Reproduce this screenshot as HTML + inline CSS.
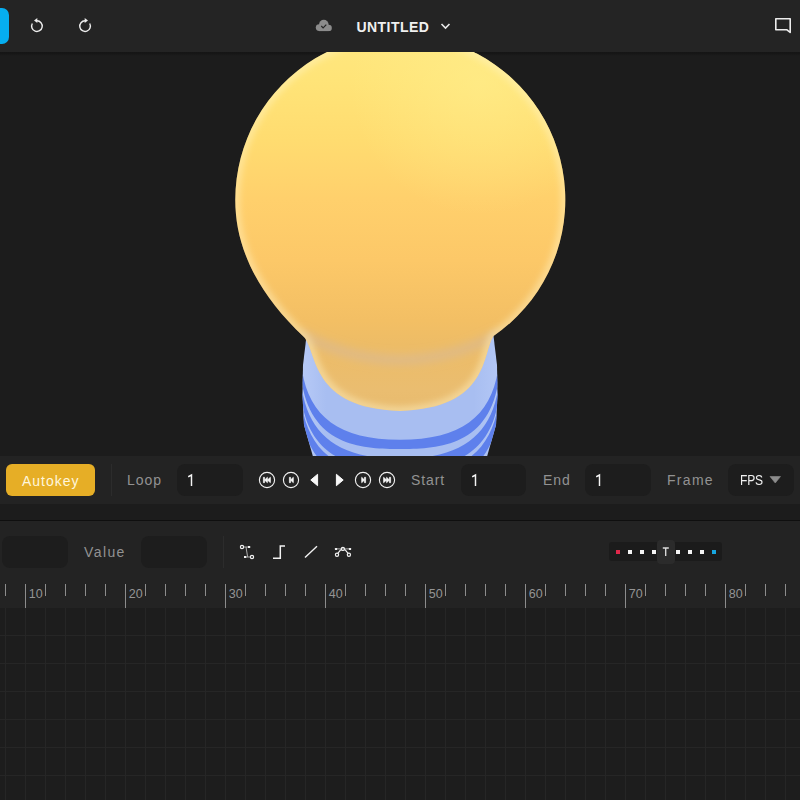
<!DOCTYPE html>
<html><head><meta charset="utf-8">
<style>
*{margin:0;padding:0;box-sizing:border-box}
html,body{width:800px;height:800px;overflow:hidden;background:#1c1c1c;font-family:"Liberation Sans",sans-serif}
.a{position:absolute}
#hdr{left:0;top:0;width:800px;height:52px;background:#242424}
#vp{left:0;top:52px;width:800px;height:404px;background:#1c1c1c;overflow:hidden}
#tb{left:0;top:456px;width:800px;height:48px;background:#232323}
#band{left:0;top:504px;width:800px;height:16px;background:#1c1c1c}
#line{left:0;top:520px;width:800px;height:1px;background:#0f0f0f}
#gp{left:0;top:521px;width:800px;height:87px;background:#232323}
#grid{left:0;top:608px;width:800px;height:192px;background:#1d1d1d}
.lbl{font-size:14px;color:#929292;line-height:16px;white-space:nowrap}
.inp{background:#1d1d1d;border-radius:8px}
.val{font-size:14px;color:#f2f2f2;line-height:16px}
</style></head><body>
<div id="hdr" class="a">
  <div class="a" style="left:-8px;top:8px;width:17px;height:36px;background:#06aef0;border-radius:7px"></div>
  <svg class="a" style="left:0;top:0" width="800" height="52">
    <!-- undo -->
    <g fill="none" stroke="#ededed" stroke-width="1.4">
      <path d="M32.3 23.5 A5.3 5.3 0 1 0 37 20.8"/>
      <path d="M89.7 23.5 A5.3 5.3 0 1 1 85 20.8"/>
    </g>
    <path d="M34 20.4 L37.3 17.9 L37.3 22.9 Z" fill="#ededed"/>
    <path d="M88 20.4 L84.7 17.9 L84.7 22.9 Z" fill="#ededed"/>
    <!-- cloud -->
    <g fill="#8c8c8c"><circle cx="319.2" cy="27.6" r="3.4"/><circle cx="323.8" cy="24.6" r="4.8"/><circle cx="328.6" cy="27.9" r="3.2"/><rect x="319" y="26" width="9.8" height="5.1"/></g>
    <path d="M321.3 26 l1.8 1.8 l3.2 -3.2" fill="none" stroke="#262626" stroke-width="1.2"/>
    <!-- chevron -->
    <path d="M441.5 24 L445.5 28 L449.5 24" fill="none" stroke="#e8e8e8" stroke-width="1.6"/>
    <!-- comment -->
    <path d="M775.8 18.8 H790.2 V32.5 L787 29.8 H775.8 Z" fill="none" stroke="#ececec" stroke-width="1.6" stroke-linejoin="round"/>
  </svg>
  <div class="a" style="left:356.5px;top:17.5px;font-size:14px;font-weight:bold;color:#f0f0f0;letter-spacing:0.45px;line-height:18px">UNTITLED</div>
</div>

<div id="vp" class="a">
  <div class="a" style="left:0;top:0;width:800px;height:4px;background:linear-gradient(#151515,#161616 40%,rgba(28,28,28,0))"></div>
  <svg class="a" style="left:0;top:-52px" width="800" height="508">
    <defs>
      <linearGradient id="gy" x1="0" y1="40" x2="0" y2="410" gradientUnits="userSpaceOnUse">
        <stop offset="0" stop-color="#ffe77f"/>
        <stop offset="0.108" stop-color="#ffe478"/>
        <stop offset="0.27" stop-color="#ffdc70"/>
        <stop offset="0.43" stop-color="#ffd06c"/>
        <stop offset="0.595" stop-color="#fcc868"/>
        <stop offset="0.757" stop-color="#f3bf64"/>
        <stop offset="0.824" stop-color="#edbc66"/>
        <stop offset="0.946" stop-color="#eabd70"/>
        <stop offset="1" stop-color="#e8bb6e"/>
      </linearGradient>
      <radialGradient id="gh" cx="480" cy="85" r="130" gradientUnits="userSpaceOnUse">
        <stop offset="0" stop-color="#fff090" stop-opacity="0.5"/>
        <stop offset="1" stop-color="#fff08e" stop-opacity="0"/>
      </radialGradient>
      <radialGradient id="grim" cx="400" cy="199.5" r="166" gradientUnits="userSpaceOnUse">
        <stop offset="0.86" stop-color="#fff0c0" stop-opacity="0"/>
        <stop offset="1" stop-color="#fff0c0" stop-opacity="0.45"/>
      </radialGradient>
      <linearGradient id="gb" x1="303" y1="0" x2="497" y2="0" gradientUnits="userSpaceOnUse">
        <stop offset="0" stop-color="#b6c9f6"/>
        <stop offset="0.12" stop-color="#a8bef1"/>
        <stop offset="0.88" stop-color="#a8bef1"/>
        <stop offset="1" stop-color="#b2c6f5"/>
      </linearGradient>
      <clipPath id="cb"><path d="M306.5 336 L493.5 336 L497 365 L497.5 395 L496 425 L487.2 456 L312.8 456 L304 425 L302.5 395 L303 365 Z"/></clipPath>
      <clipPath id="cbulb"><path d="M304 337 C257 293 235.3 247 235.3 200 A165 165 0 1 1 493.5 336 C482 353 490 408 400 411 C310 408 318 353 304 337 Z"/></clipPath>
      <filter id="blur4" x="-20%" y="-20%" width="140%" height="140%"><feGaussianBlur stdDeviation="3"/></filter>
      <filter id="blur6" x="-20%" y="-50%" width="140%" height="200%"><feGaussianBlur stdDeviation="4.5"/></filter>
      <filter id="blur1" x="-10%" y="-10%" width="120%" height="120%"><feGaussianBlur stdDeviation="1.2"/></filter>
    </defs>
    <!-- base -->
    <g clip-path="url(#cb)">
      <rect x="290" y="330" width="220" height="140" fill="url(#gb)"/>
      <g fill="#5e80ec"><path d="M300 343.5 C300 407.5 328 439.75 400 439.75 C472 439.75 500 407.5 500 343.5 L500 358 C500 448 438 449 400 449 C362 449 300 448 300 358 Z"/><path d="M300 362.5 C300 426.5 328 458.75 400 458.75 C472 458.75 500 426.5 500 362.5 L500 377 C500 467 438 468 400 468 C362 468 300 467 300 377 Z"/><path d="M300 379.0 C300 443.0 328 475.25 400 475.25 C472 475.25 500 443.0 500 379.0 L500 393.5 C500 483.5 438 484.5 400 484.5 C362 484.5 300 483.5 300 393.5 Z"/></g>
    </g>
    <!-- bulb -->
    <path d="M304 337 C257 293 235.3 247 235.3 200 A165 165 0 1 1 493.5 336 C482 353 490 408 400 411 C310 408 318 353 304 337 Z" fill="url(#gy)"/>
    <path d="M304 337 C257 293 235.3 247 235.3 200 A165 165 0 1 1 493.5 336 C482 353 490 408 400 411 C310 408 318 353 304 337 Z" fill="url(#gh)"/>
    <g clip-path="url(#cbulb)"><path d="M300 334 Q400 386 500 334" fill="none" stroke="#d4b9a0" stroke-opacity="0.5" stroke-width="10" filter="url(#blur6)"/></g>
    <g clip-path="url(#cbulb)"><path d="M304 337 C257 293 235.3 247 235.3 200 A165 165 0 1 1 493.5 336 C482 353 490 408 400 411 C310 408 318 353 304 337 Z" fill="none" stroke="#fff3c8" stroke-opacity="0.45" stroke-width="9" filter="url(#blur4)"/></g>
  </svg>
</div>

<div id="tb" class="a">
  <div class="a" style="left:6px;top:8px;width:89px;height:32px;background:#e6ae26;border-radius:6px"></div>
  <div class="a" style="left:22px;top:17px;font-size:14px;color:#fff6dc;letter-spacing:1px;line-height:16px">Autokey</div>
  <div class="a" style="left:111px;top:8px;width:1px;height:32px;background:#2c2c2c"></div>
  <div class="a lbl" style="left:127px;top:16px;letter-spacing:1px">Loop</div>
  <div class="a inp" style="left:177px;top:8px;width:66px;height:32px"></div>
  <svg class="a" style="left:188px;top:16px" width="10" height="24"><path d="M0.8 4.4 L3.5 3 V13.2" fill="none" stroke="#f4f4f4" stroke-width="1.45" stroke-linecap="square" stroke-linejoin="miter"/></svg>
  <svg class="a" style="left:0;top:0" width="800" height="48">
    <g fill="none" stroke="#f0f0f0" stroke-width="1.15">
      <circle cx="267" cy="24" r="7.6"/>
      <circle cx="291" cy="24" r="7.6"/>
      <circle cx="363" cy="24" r="7.6"/>
      <circle cx="387" cy="24" r="7.6"/>
    </g>
    <g fill="#f8f8f8" stroke="#f8f8f8" stroke-width="0.7" stroke-linejoin="round">
      <rect x="263.4" y="21.3" width="1.1" height="5.4"/>
      <path d="M264.5 24 L267.4 21.3 V26.7 Z M267.4 24 L270.4 21.3 V26.7 Z"/>
      <rect x="289.4" y="21.3" width="1.1" height="5.4"/>
      <path d="M290.5 24 L293.3 21.3 V26.7 Z"/>
      <path d="M317.6 18.3 V29.7 L310.8 24 Z" stroke-width="1"/>
      <path d="M336.4 18.3 V29.7 L343.2 24 Z" stroke-width="1"/>
      <rect x="364.5" y="21.3" width="1.1" height="5.4"/>
      <path d="M364.5 24 L361.7 21.3 V26.7 Z"/>
      <rect x="389.5" y="21.3" width="1.1" height="5.4"/>
      <path d="M389.5 24 L386.6 21.3 V26.7 Z M386.6 24 L383.6 21.3 V26.7 Z"/>
    </g>
  </svg>
  <div class="a lbl" style="left:411px;top:16px;letter-spacing:0.9px">Start</div>
  <div class="a inp" style="left:461px;top:8px;width:65px;height:32px"></div>
  <svg class="a" style="left:472px;top:16px" width="10" height="24"><path d="M0.8 4.4 L3.5 3 V13.2" fill="none" stroke="#f4f4f4" stroke-width="1.45" stroke-linecap="square" stroke-linejoin="miter"/></svg>
  <div class="a lbl" style="left:543px;top:16px;letter-spacing:1px">End</div>
  <div class="a inp" style="left:585px;top:8px;width:66px;height:32px"></div>
  <svg class="a" style="left:596px;top:16px" width="10" height="24"><path d="M0.8 4.4 L3.5 3 V13.2" fill="none" stroke="#f4f4f4" stroke-width="1.45" stroke-linecap="square" stroke-linejoin="miter"/></svg>
  <div class="a lbl" style="left:667px;top:16px;letter-spacing:1.3px">Frame</div>
  <div class="a inp" style="left:728px;top:8px;width:66px;height:32px"></div>
  <div class="a val" style="left:739.6px;top:16px;font-size:14px;letter-spacing:-0.2px;color:#f0f0f0;transform:scaleX(0.86);transform-origin:0 0">FPS</div>
  <svg class="a" style="left:760px;top:0" width="40" height="48"><path d="M10 20.5 H20.5 L15.25 27 Z" fill="#8c8c8c" stroke="#8c8c8c" stroke-width="0.6" stroke-linejoin="round"/></svg>
</div>

<div id="band" class="a"></div>
<div id="line" class="a"></div>

<div id="gp" class="a">
  <div class="a inp" style="left:2px;top:15px;width:66px;height:32px"></div>
  <div class="a lbl" style="left:84px;top:23px;letter-spacing:1.4px">Value</div>
  <div class="a inp" style="left:141px;top:15px;width:66px;height:32px"></div>
  <div class="a" style="left:223px;top:15px;width:1px;height:32px;background:#2c2c2c"></div>
  <svg class="a" style="left:0;top:0" width="800" height="87">
    <g fill="none" stroke="#bdbdbd" stroke-width="0.9">
      <path d="M243.5 26 H248 M246 26 L247.6 35.8 M246 36 H250.5"/>
      <path d="M336 27.9 H350"/>
    </g>
    <g fill="none" stroke="#f2f2f2" stroke-width="1.2">
      <circle cx="242" cy="26" r="1.6"/>
      <circle cx="252" cy="36" r="1.6"/>
      <path d="M273 37.3 H280.3 V25 H285" stroke-width="1.5"/>
      <path d="M305 36.6 L317 25.2" stroke-width="1.4"/>
      <circle cx="342.9" cy="27.9" r="1.6"/>
      <circle cx="337" cy="33.8" r="1.6"/>
      <path d="M337.8 32.4 L340.8 28.6 M345 28.6 L348.1 32.4"/>
      <circle cx="348.9" cy="33.8" r="1.6"/>
    </g>
    <g fill="#f4f4f4">
      <rect x="248" y="25" width="2.2" height="2"/>
      <rect x="244" y="35" width="2.2" height="2"/>
      <rect x="334.9" y="26.9" width="2.2" height="2" rx="0.5"/>
      <rect x="348.9" y="26.9" width="2.2" height="2" rx="0.5"/>
    </g>
  </svg>
  <!-- keyframe strip -->
  <div class="a" style="left:609px;top:21px;width:113px;height:19px;background:#1b1b1b;border-radius:3px"></div>
  <div class="a" style="left:657px;top:19px;width:18px;height:24px;background:#2b2b2b;border-radius:4px"></div>
  <svg class="a" style="left:657px;top:19px" width="18" height="24"><path d="M5.8 8 H11.8 M8.7 8 V16" fill="none" stroke="#dcdcdc" stroke-width="1.35"/></svg>
  <div class="a" style="left:615.5px;top:29px;width:4px;height:4px;background:#e0284a"></div>
  <div class="a" style="left:627.5px;top:29px;width:4px;height:4px;background:#f4f4f4"></div>
  <div class="a" style="left:639.5px;top:29px;width:4px;height:4px;background:#f4f4f4"></div>
  <div class="a" style="left:651.5px;top:29px;width:4px;height:4px;background:#f4f4f4"></div>
  <div class="a" style="left:675.5px;top:29px;width:4px;height:4px;background:#f4f4f4"></div>
  <div class="a" style="left:687.5px;top:29px;width:4px;height:4px;background:#f4f4f4"></div>
  <div class="a" style="left:699.5px;top:29px;width:4px;height:4px;background:#f4f4f4"></div>
  <div class="a" style="left:711.5px;top:29px;width:4px;height:4px;background:#17a6e0"></div>
</div>

<div id="grid" class="a">
  <svg class="a" style="left:0;top:0" width="800" height="192" id="gridsvg"><g fill="#262626"><rect x="5" y="0" width="1" height="192"/><rect x="25" y="0" width="1" height="192"/><rect x="45" y="0" width="1" height="192"/><rect x="65" y="0" width="1" height="192"/><rect x="85" y="0" width="1" height="192"/><rect x="105" y="0" width="1" height="192"/><rect x="125" y="0" width="1" height="192"/><rect x="145" y="0" width="1" height="192"/><rect x="165" y="0" width="1" height="192"/><rect x="185" y="0" width="1" height="192"/><rect x="205" y="0" width="1" height="192"/><rect x="225" y="0" width="1" height="192"/><rect x="245" y="0" width="1" height="192"/><rect x="265" y="0" width="1" height="192"/><rect x="285" y="0" width="1" height="192"/><rect x="305" y="0" width="1" height="192"/><rect x="325" y="0" width="1" height="192"/><rect x="345" y="0" width="1" height="192"/><rect x="365" y="0" width="1" height="192"/><rect x="385" y="0" width="1" height="192"/><rect x="405" y="0" width="1" height="192"/><rect x="425" y="0" width="1" height="192"/><rect x="445" y="0" width="1" height="192"/><rect x="465" y="0" width="1" height="192"/><rect x="485" y="0" width="1" height="192"/><rect x="505" y="0" width="1" height="192"/><rect x="525" y="0" width="1" height="192"/><rect x="545" y="0" width="1" height="192"/><rect x="565" y="0" width="1" height="192"/><rect x="585" y="0" width="1" height="192"/><rect x="605" y="0" width="1" height="192"/><rect x="625" y="0" width="1" height="192"/><rect x="645" y="0" width="1" height="192"/><rect x="665" y="0" width="1" height="192"/><rect x="685" y="0" width="1" height="192"/><rect x="705" y="0" width="1" height="192"/><rect x="725" y="0" width="1" height="192"/><rect x="745" y="0" width="1" height="192"/><rect x="765" y="0" width="1" height="192"/><rect x="785" y="0" width="1" height="192"/><rect x="0" y="27" width="800" height="1"/><rect x="0" y="55" width="800" height="1"/><rect x="0" y="83" width="800" height="1"/><rect x="0" y="111" width="800" height="1"/><rect x="0" y="139" width="800" height="1"/><rect x="0" y="167" width="800" height="1"/></g></svg>
</div>
<svg class="a" style="left:0;top:584px" width="800" height="24" id="ruler"><g fill="#8c8c8c"><rect x="5" y="0" width="1" height="12"/><rect x="25" y="0" width="1" height="24"/><rect x="45" y="0" width="1" height="12"/><rect x="65" y="0" width="1" height="12"/><rect x="85" y="0" width="1" height="12"/><rect x="105" y="0" width="1" height="12"/><rect x="125" y="0" width="1" height="24"/><rect x="145" y="0" width="1" height="12"/><rect x="165" y="0" width="1" height="12"/><rect x="185" y="0" width="1" height="12"/><rect x="205" y="0" width="1" height="12"/><rect x="225" y="0" width="1" height="24"/><rect x="245" y="0" width="1" height="12"/><rect x="265" y="0" width="1" height="12"/><rect x="285" y="0" width="1" height="12"/><rect x="305" y="0" width="1" height="12"/><rect x="325" y="0" width="1" height="24"/><rect x="345" y="0" width="1" height="12"/><rect x="365" y="0" width="1" height="12"/><rect x="385" y="0" width="1" height="12"/><rect x="405" y="0" width="1" height="12"/><rect x="425" y="0" width="1" height="24"/><rect x="445" y="0" width="1" height="12"/><rect x="465" y="0" width="1" height="12"/><rect x="485" y="0" width="1" height="12"/><rect x="505" y="0" width="1" height="12"/><rect x="525" y="0" width="1" height="24"/><rect x="545" y="0" width="1" height="12"/><rect x="565" y="0" width="1" height="12"/><rect x="585" y="0" width="1" height="12"/><rect x="605" y="0" width="1" height="12"/><rect x="625" y="0" width="1" height="24"/><rect x="645" y="0" width="1" height="12"/><rect x="665" y="0" width="1" height="12"/><rect x="685" y="0" width="1" height="12"/><rect x="705" y="0" width="1" height="12"/><rect x="725" y="0" width="1" height="24"/><rect x="745" y="0" width="1" height="12"/><rect x="765" y="0" width="1" height="12"/><rect x="785" y="0" width="1" height="12"/></g><g fill="#949494" font-size="12.5" font-family="Liberation Sans"><text x="28.7" y="13.9">10</text><text x="128.7" y="13.9">20</text><text x="228.7" y="13.9">30</text><text x="328.7" y="13.9">40</text><text x="428.7" y="13.9">50</text><text x="528.7" y="13.9">60</text><text x="628.7" y="13.9">70</text><text x="728.7" y="13.9">80</text></g></svg>
</body></html>
